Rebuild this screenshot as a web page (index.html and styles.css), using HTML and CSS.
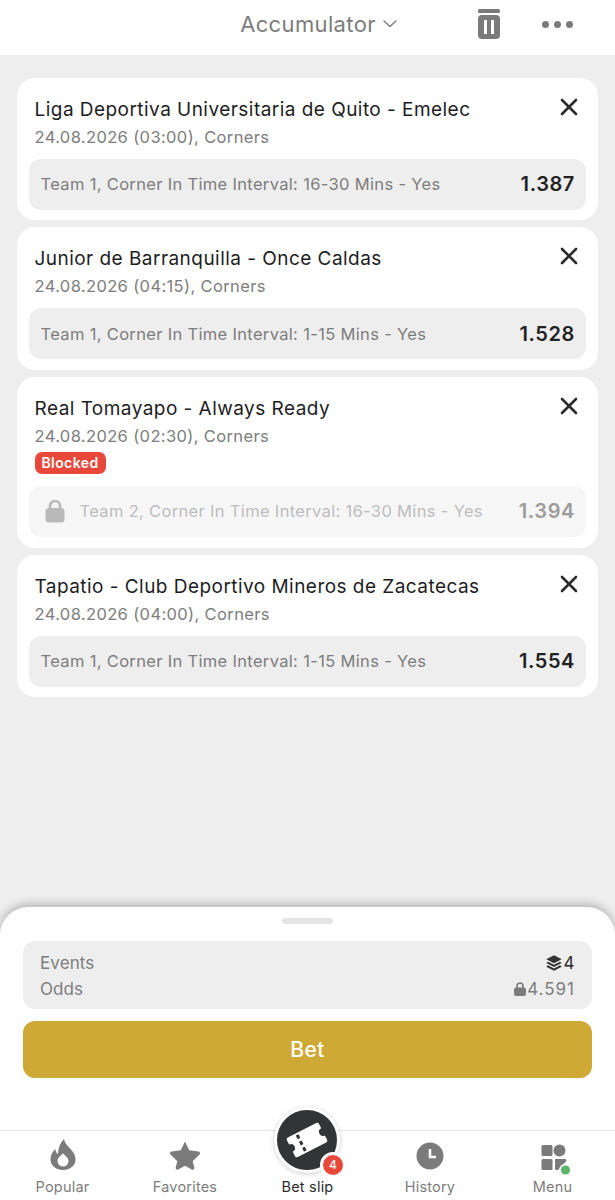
FILE: index.html
```html
<!DOCTYPE html>
<html lang="en">
<head>
<meta charset="utf-8">
<title>Bet slip</title>
<link rel="stylesheet" href="styles.css">
</head>
<body>
<div class="page">
  <header class="top">
    <div class="top-title">Accumulator
      <svg class="chev" viewBox="0 0 14 8" width="14" height="8"><path d="M1 1l6 5.500L13 1" fill="none" stroke="#7d7d7d" stroke-width="1.400" stroke-linecap="round" stroke-linejoin="round"/></svg>
    </div>
    <svg class="trash" viewBox="0 0 22 30" width="22" height="30"><rect x="0" y="0" width="22" height="4" rx="1.500" fill="#7b7b7b"/><path d="M4 6h14a4 4 0 0 1 4 4v16a4 4 0 0 1-4 4H4a4 4 0 0 1-4-4V10a4 4 0 0 1 4-4z" fill="#7b7b7b"/><rect x="6" y="11" width="3" height="14" fill="#fff"/><rect x="13" y="11" width="3" height="14" fill="#fff"/></svg>
    <div class="dots"><i></i><i></i><i></i></div>
  </header>

  <main class="list">
    <section class="card">
      <svg class="close" viewBox="0 0 18 18" width="18" height="18"><path d="M2 2l14 14M16 2L2 16" stroke="#2b2b2d" stroke-width="2.600" stroke-linecap="round"/></svg>
      <h2 class="match">Liga Deportiva Universitaria de Quito - Emelec</h2>
      <p class="meta">24.08.2026 (03:00), Corners</p>
      <div class="pick"><span class="pick-name">Team 1, Corner In Time Interval: 16-30 Mins - Yes</span><b class="odd">1.387</b></div>
    </section>
    <section class="card">
      <svg class="close" viewBox="0 0 18 18" width="18" height="18"><path d="M2 2l14 14M16 2L2 16" stroke="#2b2b2d" stroke-width="2.600" stroke-linecap="round"/></svg>
      <h2 class="match">Junior de Barranquilla - Once Caldas</h2>
      <p class="meta">24.08.2026 (04:15), Corners</p>
      <div class="pick"><span class="pick-name">Team 1, Corner In Time Interval: 1-15 Mins - Yes</span><b class="odd">1.528</b></div>
    </section>
    <section class="card card-blocked">
      <svg class="close" viewBox="0 0 18 18" width="18" height="18"><path d="M2 2l14 14M16 2L2 16" stroke="#2b2b2d" stroke-width="2.600" stroke-linecap="round"/></svg>
      <h2 class="match">Real Tomayapo - Always Ready</h2>
      <p class="meta">24.08.2026 (02:30), Corners</p>
      <span class="blocked">Blocked</span>
      <div class="pick pick-locked">
        <svg class="lock-big" viewBox="0 0 20 24" width="20" height="24"><path d="M5 10V7a5 5 0 0 1 10 0v3" fill="none" stroke="#b9b9b9" stroke-width="2.600"/><rect x="0.500" y="9" width="19" height="14.500" rx="3.500" fill="#b9b9b9"/></svg>
        <span class="pick-name">Team 2, Corner In Time Interval: 16-30 Mins - Yes</span><b class="odd">1.394</b>
      </div>
    </section>
    <section class="card">
      <svg class="close" viewBox="0 0 18 18" width="18" height="18"><path d="M2 2l14 14M16 2L2 16" stroke="#2b2b2d" stroke-width="2.600" stroke-linecap="round"/></svg>
      <h2 class="match">Tapatio - Club Deportivo Mineros de Zacatecas</h2>
      <p class="meta">24.08.2026 (04:00), Corners</p>
      <div class="pick"><span class="pick-name">Team 1, Corner In Time Interval: 1-15 Mins - Yes</span><b class="odd">1.554</b></div>
    </section>
  </main>

  <section class="sheet">
    <div class="grip"></div>
    <div class="summary">
      <div class="sum-row"><span>Events</span><span class="sum-val dark">
        <svg viewBox="0 0 16 16" width="16" height="16"><path d="M8 .300l7.700 4L8 8.300.300 4.300z" fill="#333"/><path d="M2 6.700L.300 8 8 12l7.700-4L14 6.700 8 9.800z" fill="#333"/><path d="M2 10.300L.300 11.700 8 15.700l7.700-4L14 10.300l-6 3.100z" fill="#333"/></svg>4</span></div>
      <div class="sum-row"><span>Odds</span><span class="sum-val wide">
        <svg viewBox="0 0 12 14" width="12" height="14"><path d="M3 6V4a3 3 0 0 1 6 0v2" fill="none" stroke="#7b7b7b" stroke-width="1.700"/><rect y="5.500" width="12" height="8.500" rx="2" fill="#7b7b7b"/></svg>4.591</span></div>
    </div>
    <button class="bet">Bet</button>
  </section>

  <nav class="nav">
    <div class="tab">
      <svg viewBox="0 0 26 31" width="26" height="31"><path fill-rule="evenodd" d="M14 0c1 5 4 7 7 10.500 3 3.300 4.500 6.500 4.500 10C25.500 26.500 20 31 13 31S.5 26.500.5 20.500c0-4.500 2-8 5-10.500 0 2.500.8 4 2.500 5C8 9.500 10 4 14 0zM13 14c-1 2.500-5.500 4-5.500 8a5.500 5.500 0 0 0 11 0c0-4-4.500-5.500-5.500-8z" fill="#7b7b7b"/></svg>
      <span>Popular</span></div>
    <div class="tab">
      <svg viewBox="0 0 32 30" width="32" height="30"><path d="M16 1.500l4.200 8.700 9.300 1.400c1.500.2 2 2 1 3l-6.800 6.700 1.600 6.300c.3 1.500-1.200 2.600-2.500 1.900L16 25.700l-6.800 3.800c-1.300.7-2.800-.4-2.500-1.900l1.600-6.300-6.800-6.700c-1-1-.5-2.800 1-3l9.300-1.400z" fill="#7b7b7b"/></svg>
      <span>Favorites</span></div>
    <div class="tab tab-active">
      <div class="fab">
        <svg class="ticket" viewBox="0 0 42 34" width="42" height="34"><g transform="rotate(-27 21 17)"><path d="M5 6H37a2 2 0 0 1 2 2v5a4 4 0 0 0 0 8v5a2 2 0 0 1-2 2H5a2 2 0 0 1-2-2v-5a4 4 0 0 0 0-8V8a2 2 0 0 1 2-2z" fill="#fff"/><g fill="#333436"><rect x="13" y="8" width="3" height="4"/><rect x="13" y="15" width="3" height="4"/><rect x="13" y="22" width="3" height="4"/></g></g></svg>
        <b class="badge">4</b>
      </div>
      <span>Bet slip</span></div>
    <div class="tab">
      <svg viewBox="0 0 28 28" width="28" height="28"><circle cx="14" cy="14" r="13.500" fill="#7b7b7b"/><path d="M14 7v8h6" fill="none" stroke="#fff" stroke-width="2.600"/></svg>
      <span>History</span></div>
    <div class="tab">
      <svg class="menu-icon" viewBox="0 0 30 30" width="30" height="30"><rect x="3.500" y="5" width="11" height="11" rx="1.500" fill="#7b7b7b"/><circle cx="21.500" cy="10.500" r="6" fill="#7b7b7b"/><rect x="3.500" y="19" width="11" height="11" rx="1.500" fill="#7b7b7b"/><path d="M17 19h10a1.500 1.500 0 0 1 1 2.500L20 30h-1.500a1.500 1.500 0 0 1-1.500-1.500z" fill="#7b7b7b"/><circle cx="27.500" cy="30" r="6.200" fill="#fff"/><circle cx="27.500" cy="30" r="4.600" fill="#5cb56b"/></svg>
      <span>Menu</span></div>
  </nav>
</div>
</body>
</html>
```
FILE: styles.css
```css
* { box-sizing: border-box; }
html, body { margin: 0; padding: 0; }
body { font-family: Inter, "Liberation Sans", sans-serif; background: #eee; }
.page { width: 615px; height: 1200px; display: flex; flex-direction: column; overflow: hidden; position: relative; }

.top { height: 55px; flex: none; background: #fff; position: relative; display: flex; align-items: center; justify-content: center; }
.top-title { font-size: 22px; letter-spacing: .36px; color: #7d7d7d; display: flex; align-items: center; gap: 7px; margin-left: 22px; padding-bottom: 7px; }
.trash { position: absolute; left: 478px; top: 9px; }
.dots { position: absolute; left: 542px; top: 21px; display: flex; gap: 5px; }
.dots i { width: 7px; height: 7px; border-radius: 50%; background: #7b7b7b; }

.list { flex: 1; padding: 23px 17px 0; display: flex; flex-direction: column; gap: 7px; }
.card { background: #fff; border-radius: 18px; padding: 19.700px 12px 10.800px; position: relative; }
.card-blocked { padding-bottom: 11.300px; }
.close { position: absolute; right: 20px; top: 20px; }
.match { margin: 0 0 0 5.500px; font-size: 19px; letter-spacing: .46px; line-height: 24px; font-weight: 400; color: #1d1d1f; }
.meta { margin: 5px 0 0 5.500px; font-size: 16.500px; letter-spacing: .37px; line-height: 20px; color: #7d7d7d; }
.pick { margin-top: 12px; height: 51px; background: #eee; border-radius: 12px; display: flex; align-items: center; justify-content: space-between; padding: 0 11px 0 11.500px; }
.pick-name { font-size: 16.500px; letter-spacing: .33px; color: #7d7d7d; }
.odd { font-size: 20px; letter-spacing: .6px; font-weight: 600; color: #222; }
.blocked { display: block; width: 71px; height: 22px; margin: 6px 0 0 5.500px; background: #e8483a; border-radius: 7px; color: #fff; font-size: 14px; letter-spacing: .4px; font-weight: 600; line-height: 22px; text-align: center; }
.pick-locked { margin-top: 12px; background: #f6f6f6; justify-content: flex-start; }
.pick-locked .pick-name { color: #bdbdbd; margin-left: 15px; flex: 1; }
.pick-locked .odd { color: #9c9c9c; }
.lock-big { margin-left: 4px; }

.sheet { flex: none; height: 223px; background: #fff; border-radius: 28px 28px 0 0; box-shadow: 0 -3px 10px rgba(0,0,0,.24); padding: 11px 23px 0; position: relative; }
.grip { width: 51px; height: 6px; border-radius: 3px; background: #e4e4e4; margin: 0 auto 17px; }
.summary { background: #eee; border-radius: 12px; height: 68px; padding: 9px 17px; }
.sum-row { display: flex; justify-content: space-between; align-items: center; height: 26px; font-size: 17px; letter-spacing: .1px; color: #7d7d7d; }
.sum-val { display: flex; align-items: center; gap: 1px; letter-spacing: .6px; }
.wide { letter-spacing: 1px; }
.dark { color: #2b2b2d; }
.bet { display: block; width: 100%; height: 57px; margin-top: 12px; border: 0; border-radius: 12px; background: #cfa936; color: #fff; font: 500 21px Inter, "Liberation Sans", sans-serif; letter-spacing: .4px; }

.nav { flex: none; height: 70px; background: #fff; border-top: 1px solid #e6e6e6; display: grid; grid-template-columns: 125px 120px 125px 120px 125px; position: relative; }
.tab { display: flex; flex-direction: column; align-items: center; justify-content: flex-end; padding-bottom: 5px; gap: 8px; font-size: 14.500px; letter-spacing: .2px; color: #7d7d7d; position: relative; }
.tab-active { color: #2b2b2d; }
.menu-icon, .ticket { overflow: visible; }
.fab { position: absolute; left: 29px; top: -24px; width: 66px; height: 66px; border-radius: 50%; background: #333436; border: 3px solid #fff; box-shadow: 0 1px 5px rgba(0,0,0,.2); display: flex; align-items: center; justify-content: center; }
.badge { position: absolute; right: -9px; bottom: -8px; background: #e8483a; border: 3px solid #fff; border-radius: 50%; box-sizing: content-box; width: 20px; height: 20px; color: #fff; font-size: 12px; font-weight: 500; line-height: 20px; text-align: center; letter-spacing: 0; }
```
